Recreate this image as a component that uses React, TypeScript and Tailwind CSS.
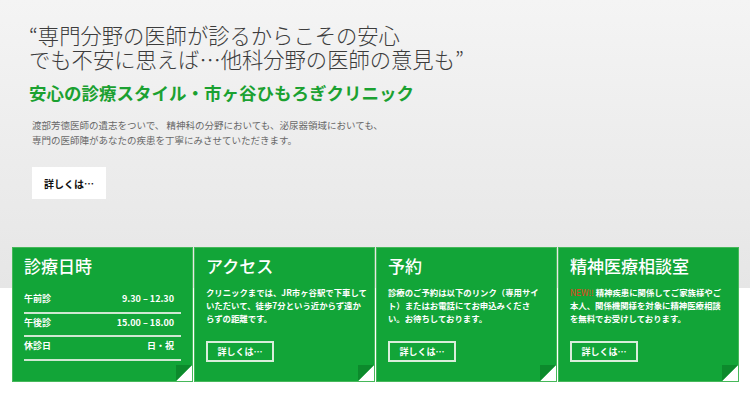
const jp = { fontFamily: '"Noto Sans CJK JP", "Noto Sans", sans-serif' };

function Fold() {
  return (
    <div className="absolute bottom-0 right-0 h-4 w-4">
      <div className="absolute inset-0 bg-white [clip-path:polygon(100%_0,100%_100%,0_100%)]" />
      <div className="absolute inset-0 bg-[#0c8a2c] [clip-path:polygon(0_0,100%_0,0_100%)]" />
    </div>
  );
}

function MoreButton() {
  return (
    <div className="mt-[16px] flex h-[21px] w-[68px] items-center justify-center border-2 border-[#d9eedb] text-[9px] font-bold text-white">
      詳しくは…
    </div>
  );
}

function Card({ title, children }: { title: string; children: React.ReactNode }) {
  return (
    <div className="relative h-[135px] w-[181px] border border-[#46b85a] bg-[#12a538] px-[11px] pt-[6px]">
      <h3 className="text-[17px] font-medium leading-[24px] text-white">{title}</h3>
      {children}
      <Fold />
    </div>
  );
}

function Body({ lines }: { lines: React.ReactNode[] }) {
  return (
    <p className="mt-[8px] whitespace-nowrap text-[8.4px] font-bold leading-[13px] text-white">
      {lines.map((l, i) => (
        <span key={i} className="block">
          {l}
        </span>
      ))}
    </p>
  );
}

const hours = [
  ["午前診", "9.30 – 12.30"],
  ["午後診", "15.00 – 18.00"],
  ["休診日", "日・祝"],
];

export default function App() {
  return (
    <div className="h-[399px] w-[750px] overflow-hidden bg-white" style={jp}>
      <section className="h-[288px] bg-gradient-to-b from-[#f4f4f4] to-[#e6e6e6] pl-[29px] pt-[23px]">
        <h1 className="text-[21.3px] font-light leading-[24px] text-[#3c3c3c]">
          “専門分野の医師が診るからこその安心
          <br />
          でも不安に思えば…他科分野の医師の意見も”
        </h1>
        <h2 className="mt-[11px] text-[17.5px] font-bold leading-[22px] text-[#1ba131]">
          安心の診療スタイル・市ヶ谷ひもろぎクリニック
        </h2>
        <p className="ml-[3px] mt-[14px] text-[9.5px] leading-[15px] text-[#686868]">
          渡部芳徳医師の遺志をついで、 精神科の分野においても、泌尿器領域においても、
          <br />
          専門の医師陣があなたの疾患を丁寧にみさせていただきます。
        </p>
        <div className="ml-[3px] mt-[19px] flex h-[32px] w-[74px] items-center justify-center bg-white text-[10px] font-bold text-[#111]">
          詳しくは…
        </div>
      </section>

      <div className="-mt-[41px] flex gap-px pl-[12px]">
        <Card title="診療日時">
          <div className="mt-[12px]">
            {hours.map(([label, time]) => (
              <div key={label} className="flex h-[23.5px] items-center justify-between border-b-2 border-[#cfe8d2] pb-[4px] pr-[7px] text-[9px] font-bold text-white">
                <span>{label}</span>
                <span>{time}</span>
              </div>
            ))}
          </div>
        </Card>
        <Card title="アクセス">
          <Body
            lines={[
              "クリニックまでは、JR市ヶ谷駅で下車して",
              "いただいて、徒歩7分という近からず遠か",
              "らずの距離です。",
            ]}
          />
          <MoreButton />
        </Card>
        <Card title="予約">
          <Body
            lines={[
              "診療のご予約は以下のリンク（専用サイ",
              "ト）またはお電話にてお申込みくださ",
              "い。お待ちしております。",
            ]}
          />
          <MoreButton />
        </Card>
        <Card title="精神医療相談室">
          <Body
            lines={[
              <>
                <span className="font-normal text-[#e8401c]">NEW!!</span> 精神疾患に関係してご家族様やご
              </>,
              "本人、関係機関様を対象に精神医療相談",
              "を無料でお受けしております。",
            ]}
          />
          <MoreButton />
        </Card>
      </div>
    </div>
  );
}
